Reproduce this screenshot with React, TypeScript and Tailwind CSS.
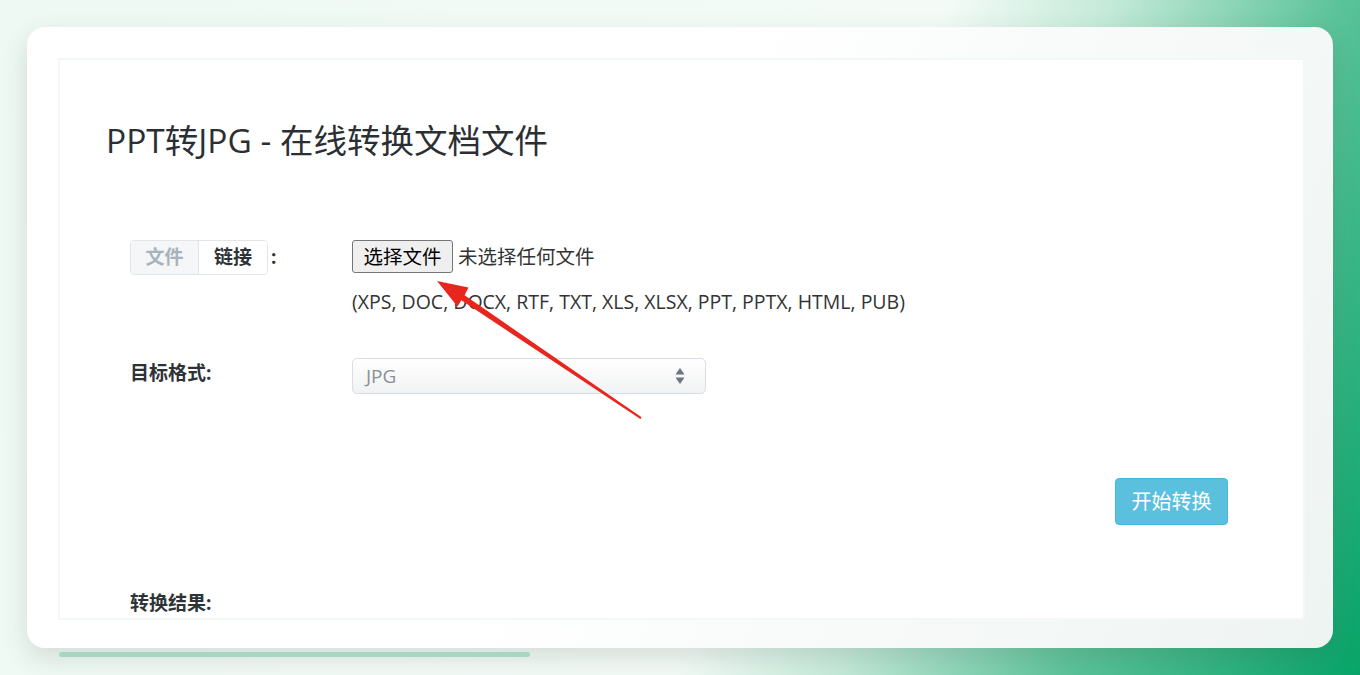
import React from 'react';

const font = { fontFamily: '"Open Sans", "Noto Sans CJK SC", sans-serif' };

function SortArrows() {
  return (
    <svg width="10" height="18" viewBox="0 0 10 18" className="text-[#6b7580]">
      <path d="M5 1 L9.5 7.5 H0.5 Z" fill="currentColor" />
      <path d="M5 17 L9.5 10.5 H0.5 Z" fill="currentColor" />
    </svg>
  );
}

function RedArrow() {
  // annotation arrow drawn over the form
  return (
    <svg className="absolute left-0 top-0 pointer-events-none" width="1360" height="675" viewBox="0 0 1360 675">
      <polygon
        points="437,281 468.5,287.5 464.6,295.3 641.6,417.3 640.4,419 461.4,300.2 457.5,306.5"
        fill="#e8261e"
      />
    </svg>
  );
}

export default function App() {
  return (
    <div
      className="relative w-[1360px] h-[675px] overflow-hidden bg-[linear-gradient(112deg,#eef9f3_0%,#f4fbf7_58%,#c5ead9_68%,#5cc39a_82%,#07a468_100%)]"
      style={font}
    >
      <div className="px-[27px] pt-[27px]">
        <div className="h-[621px] rounded-[18px] bg-[linear-gradient(115deg,#ffffff_45%,#eef4f2_100%)] shadow-[0_10px_26px_rgba(60,70,70,0.16)] pt-[31px] pl-[31px] pr-[28px]">
          <div className="h-[562px] overflow-hidden bg-white border-2 border-[#f3f7f5] pl-[46px]">
            <h1 className="mt-[60px] text-[33.5px] leading-[40px] text-[#2b2f33] font-normal">
              PPT转JPG - 在线转换文档文件
            </h1>

            <div className="ml-[24px] mt-[80px] flex items-start">
              <div className="w-[222px] flex items-center">
                <div className="flex h-[35px] rounded-[4px] border border-[#e0e5e9] overflow-hidden text-[19px] font-bold">
                  <span className="w-[68px] flex items-center justify-center bg-[#f4f6f8] text-[#a8b2bc] border-r border-[#e0e5e9]">
                    文件
                  </span>
                  <span className="w-[68px] flex items-center justify-center bg-white text-[#2e3338]">
                    链接
                  </span>
                </div>
                <span className="ml-[3px] text-[19px] font-bold text-[#333]">:</span>
              </div>
              <div className="flex flex-col">
                <div className="flex items-center h-[33px]">
                  <button className="h-[33px] w-[101px] bg-[#efefef] border border-[#767676] rounded-[3px] text-[19.5px] text-black leading-none">
                    选择文件
                  </button>
                  <span className="ml-[5px] text-[19.5px] text-[#333]">未选择任何文件</span>
                </div>
                <p className="mt-[16px] text-[19.5px] leading-[26px] text-[#333]">
                  (XPS, DOC, DOCX, RTF, TXT, XLS, XLSX, PPT, PPTX, HTML, PUB)
                </p>
              </div>
            </div>

            <div className="ml-[24px] mt-[43px] flex items-start">
              <div className="w-[222px] pt-[2px] text-[19px] leading-[26px] font-bold text-[#2e3338]">目标格式:</div>
              <div className="w-[354px] h-[36px] rounded-[5px] border border-[#d8dee3] bg-[linear-gradient(#ffffff,#f1f2f3)] flex items-center justify-between pl-[13px] pr-[20px]">
                <span className="text-[19px] text-[#8b8f94]">JPG</span>
                <SortArrows />
              </div>
            </div>

            <div className="mt-[84px] flex justify-end pr-[75px]">
              <button className="w-[113px] h-[47px] rounded-[4px] bg-[#5bc0de] border border-[#46b8da] text-white text-[20px]">
                开始转换
              </button>
            </div>

            <div className="ml-[24px] mt-[65px] text-[19px] leading-[26px] font-bold text-[#2e3338]">转换结果:</div>
          </div>
        </div>
        <div className="mt-[4px] ml-[32px] w-[471px] h-[5px] rounded-full bg-[#a7d7c3]" />
      </div>
      <RedArrow />
    </div>
  );
}
